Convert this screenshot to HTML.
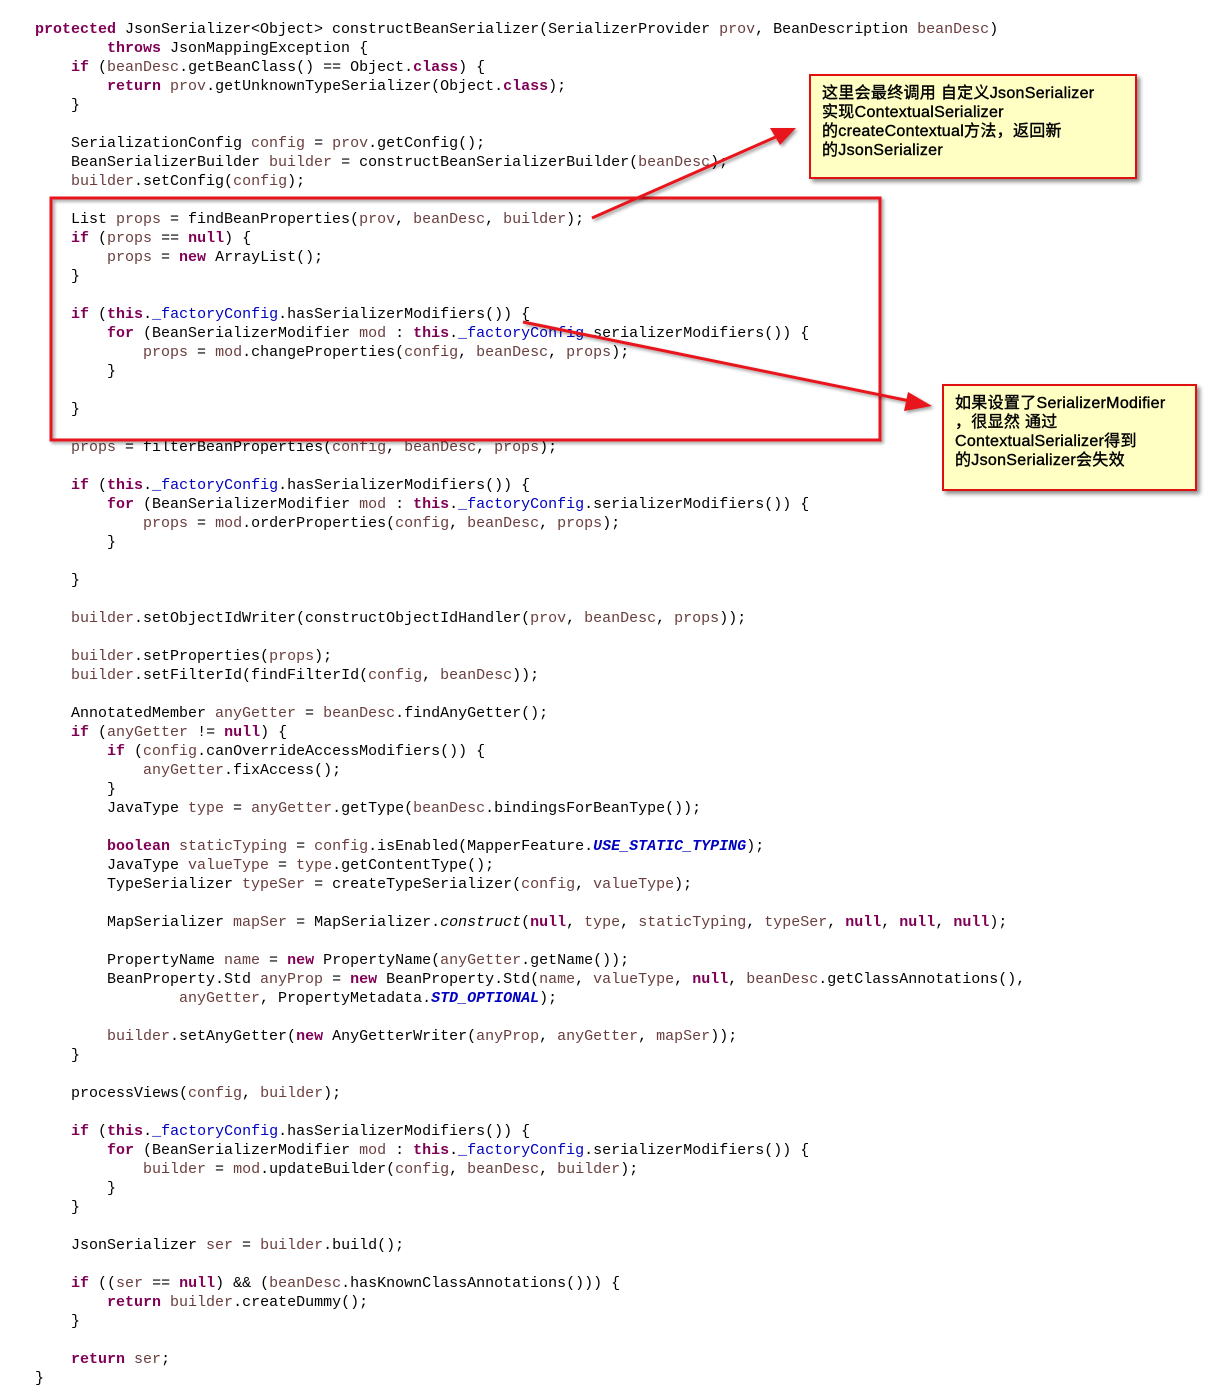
<!DOCTYPE html>
<html><head><meta charset="utf-8"><style>
html,body{margin:0;padding:0;background:#fff;width:1205px;height:1399px;overflow:hidden;position:relative}
pre{position:absolute;left:35px;top:20px;margin:0;font-family:"Liberation Mono",monospace;font-size:15px;line-height:19px;color:#000}
.k{color:#7f0055;font-weight:bold}
.v{color:#6a3e3e}
.f{color:#0000c0}
.s{color:#0000c0;font-style:italic;font-weight:bold}
.i{font-style:italic}
.note{position:absolute;background:#ffffc4;border:2px solid #e01010;box-shadow:3px 3px 4px rgba(0,0,0,.45);font-family:"Liberation Sans","Noto Sans CJK SC",sans-serif;font-size:16px;letter-spacing:0.3px;line-height:19px;font-weight:normal;-webkit-text-stroke:0.4px #000;color:#000;box-sizing:border-box;padding:8px 11px}
</style></head><body>
<pre><span class="k">protected</span> JsonSerializer&lt;Object&gt; constructBeanSerializer(SerializerProvider <span class="v">prov</span>, BeanDescription <span class="v">beanDesc</span>)
        <span class="k">throws</span> JsonMappingException {
    <span class="k">if</span> (<span class="v">beanDesc</span>.getBeanClass() == Object.<span class="k">class</span>) {
        <span class="k">return</span> <span class="v">prov</span>.getUnknownTypeSerializer(Object.<span class="k">class</span>);
    }

    SerializationConfig <span class="v">config</span> = <span class="v">prov</span>.getConfig();
    BeanSerializerBuilder <span class="v">builder</span> = constructBeanSerializerBuilder(<span class="v">beanDesc</span>);
    <span class="v">builder</span>.setConfig(<span class="v">config</span>);

    List <span class="v">props</span> = findBeanProperties(<span class="v">prov</span>, <span class="v">beanDesc</span>, <span class="v">builder</span>);
    <span class="k">if</span> (<span class="v">props</span> == <span class="k">null</span>) {
        <span class="v">props</span> = <span class="k">new</span> ArrayList();
    }

    <span class="k">if</span> (<span class="k">this</span>.<span class="f">_factoryConfig</span>.hasSerializerModifiers()) {
        <span class="k">for</span> (BeanSerializerModifier <span class="v">mod</span> : <span class="k">this</span>.<span class="f">_factoryConfig</span>.serializerModifiers()) {
            <span class="v">props</span> = <span class="v">mod</span>.changeProperties(<span class="v">config</span>, <span class="v">beanDesc</span>, <span class="v">props</span>);
        }

    }

    <span class="v">props</span> = filterBeanProperties(<span class="v">config</span>, <span class="v">beanDesc</span>, <span class="v">props</span>);

    <span class="k">if</span> (<span class="k">this</span>.<span class="f">_factoryConfig</span>.hasSerializerModifiers()) {
        <span class="k">for</span> (BeanSerializerModifier <span class="v">mod</span> : <span class="k">this</span>.<span class="f">_factoryConfig</span>.serializerModifiers()) {
            <span class="v">props</span> = <span class="v">mod</span>.orderProperties(<span class="v">config</span>, <span class="v">beanDesc</span>, <span class="v">props</span>);
        }

    }

    <span class="v">builder</span>.setObjectIdWriter(constructObjectIdHandler(<span class="v">prov</span>, <span class="v">beanDesc</span>, <span class="v">props</span>));

    <span class="v">builder</span>.setProperties(<span class="v">props</span>);
    <span class="v">builder</span>.setFilterId(findFilterId(<span class="v">config</span>, <span class="v">beanDesc</span>));

    AnnotatedMember <span class="v">anyGetter</span> = <span class="v">beanDesc</span>.findAnyGetter();
    <span class="k">if</span> (<span class="v">anyGetter</span> != <span class="k">null</span>) {
        <span class="k">if</span> (<span class="v">config</span>.canOverrideAccessModifiers()) {
            <span class="v">anyGetter</span>.fixAccess();
        }
        JavaType <span class="v">type</span> = <span class="v">anyGetter</span>.getType(<span class="v">beanDesc</span>.bindingsForBeanType());

        <span class="k">boolean</span> <span class="v">staticTyping</span> = <span class="v">config</span>.isEnabled(MapperFeature.<span class="s">USE_STATIC_TYPING</span>);
        JavaType <span class="v">valueType</span> = <span class="v">type</span>.getContentType();
        TypeSerializer <span class="v">typeSer</span> = createTypeSerializer(<span class="v">config</span>, <span class="v">valueType</span>);

        MapSerializer <span class="v">mapSer</span> = MapSerializer.<span class="i">construct</span>(<span class="k">null</span>, <span class="v">type</span>, <span class="v">staticTyping</span>, <span class="v">typeSer</span>, <span class="k">null</span>, <span class="k">null</span>, <span class="k">null</span>);

        PropertyName <span class="v">name</span> = <span class="k">new</span> PropertyName(<span class="v">anyGetter</span>.getName());
        BeanProperty.Std <span class="v">anyProp</span> = <span class="k">new</span> BeanProperty.Std(<span class="v">name</span>, <span class="v">valueType</span>, <span class="k">null</span>, <span class="v">beanDesc</span>.getClassAnnotations(),
                <span class="v">anyGetter</span>, PropertyMetadata.<span class="s">STD_OPTIONAL</span>);

        <span class="v">builder</span>.setAnyGetter(<span class="k">new</span> AnyGetterWriter(<span class="v">anyProp</span>, <span class="v">anyGetter</span>, <span class="v">mapSer</span>));
    }

    processViews(<span class="v">config</span>, <span class="v">builder</span>);

    <span class="k">if</span> (<span class="k">this</span>.<span class="f">_factoryConfig</span>.hasSerializerModifiers()) {
        <span class="k">for</span> (BeanSerializerModifier <span class="v">mod</span> : <span class="k">this</span>.<span class="f">_factoryConfig</span>.serializerModifiers()) {
            <span class="v">builder</span> = <span class="v">mod</span>.updateBuilder(<span class="v">config</span>, <span class="v">beanDesc</span>, <span class="v">builder</span>);
        }
    }

    JsonSerializer <span class="v">ser</span> = <span class="v">builder</span>.build();

    <span class="k">if</span> ((<span class="v">ser</span> == <span class="k">null</span>) &amp;&amp; (<span class="v">beanDesc</span>.hasKnownClassAnnotations())) {
        <span class="k">return</span> <span class="v">builder</span>.createDummy();
    }

    <span class="k">return</span> <span class="v">ser</span>;
}</pre>
<svg width="1205" height="1399" style="position:absolute;left:0;top:0" xmlns="http://www.w3.org/2000/svg">
<defs><filter id="sh" x="-5%" y="-5%" width="110%" height="120%"><feDropShadow dx="2" dy="2" stdDeviation="1.5" flood-opacity="0.4"/></filter></defs>
<rect x="51" y="198" width="829" height="242" fill="none" stroke="#e8141c" stroke-width="3" filter="url(#sh)"/>
<g stroke="#e8141c" stroke-width="3" fill="#e8141c" filter="url(#sh)">
<line x1="592" y1="218" x2="778" y2="136"/>
<polygon points="796,128 770,128 780,145" stroke="none"/>
<line x1="523" y1="322" x2="910" y2="401"/>
<polygon points="932,406 908,392 904,411" stroke="none"/>
</g>
</svg>
<div class="note" style="left:809px;top:74px;width:328px;height:105px">这里会最终调用 自定义JsonSerializer<br>实现ContextualSerializer<br>的createContextual方法，返回新<br>的JsonSerializer</div>
<div class="note" style="left:942px;top:384px;width:255px;height:107px">如果设置了SerializerModifier<br>，很显然 通过<br>ContextualSerializer得到<br>的JsonSerializer会失效</div>
</body></html>
